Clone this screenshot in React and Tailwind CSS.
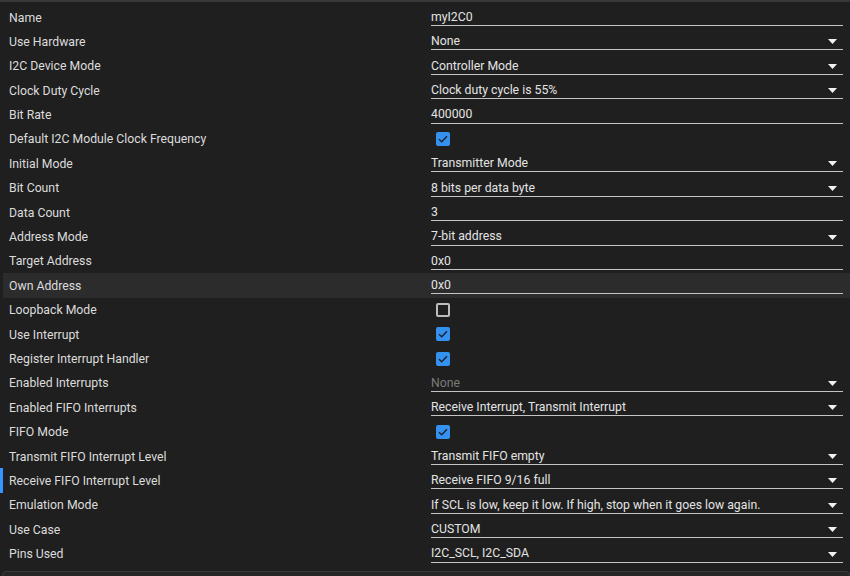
import React from "react";

const rows = [
  { label: "Name", type: "text", value: "myI2C0" },
  { label: "Use Hardware", type: "select", value: "None" },
  { label: "I2C Device Mode", type: "select", value: "Controller Mode" },
  { label: "Clock Duty Cycle", type: "select", value: "Clock duty cycle is 55%" },
  { label: "Bit Rate", type: "text", value: "400000" },
  { label: "Default I2C Module Clock Frequency", type: "check", value: true },
  { label: "Initial Mode", type: "select", value: "Transmitter Mode" },
  { label: "Bit Count", type: "select", value: "8 bits per data byte" },
  { label: "Data Count", type: "text", value: "3" },
  { label: "Address Mode", type: "select", value: "7-bit address" },
  { label: "Target Address", type: "text", value: "0x0" },
  { label: "Own Address", type: "text", value: "0x0", hover: true },
  { label: "Loopback Mode", type: "check", value: false },
  { label: "Use Interrupt", type: "check", value: true },
  { label: "Register Interrupt Handler", type: "check", value: true },
  { label: "Enabled Interrupts", type: "select", value: "None", muted: true },
  { label: "Enabled FIFO Interrupts", type: "select", value: "Receive Interrupt, Transmit Interrupt" },
  { label: "FIFO Mode", type: "check", value: true },
  { label: "Transmit FIFO Interrupt Level", type: "select", value: "Transmit FIFO empty" },
  { label: "Receive FIFO Interrupt Level", type: "select", value: "Receive FIFO 9/16 full", active: true },
  { label: "Emulation Mode", type: "select", value: "If SCL is low, keep it low. If high, stop when it goes low again." },
  { label: "Use Case", type: "select", value: "CUSTOM" },
  { label: "Pins Used", type: "select", value: "I2C_SCL, I2C_SDA" },
];

function Arrow() {
  return (
    <svg width="9" height="5" viewBox="0 0 9 5" className="mt-[1px]">
      <polygon points="0,0 9,0 4.5,5" fill="#f2f2f2" />
    </svg>
  );
}

function Checkbox({ checked }) {
  if (!checked) {
    return <div className="ml-[5px] h-[14px] w-[14px] rounded-[2px] border-2 border-[#bdbdbd]" />;
  }
  return (
    <div className="ml-[5px] flex h-[14px] w-[14px] items-center justify-center rounded-[2px] bg-[#3591f0]">
      <svg width="10" height="8" viewBox="0 0 10 8">
        <path d="M1 4.2 L3.7 6.8 L9 1.2" fill="none" stroke="#1c2430" strokeWidth="1.5" />
      </svg>
    </div>
  );
}

function Value({ row }) {
  if (row.type === "check") {
    return (
      <div className="flex h-full items-center">
        <Checkbox checked={row.value} />
      </div>
    );
  }
  return (
    <div className="flex h-[21px] items-center justify-between border-b border-[#c4c4c4] pt-[4px] pr-[6px]">
      <span className={row.muted ? "text-[#7a7a7a]" : "text-[#e3e3e3]"}>{row.value}</span>
      {row.type === "select" && <Arrow />}
    </div>
  );
}

export default function App() {
  return (
    <div
      className="h-[576px] w-[850px] overflow-hidden border-t-2 border-[#383838] bg-[#1f1f1f] text-[12.25px] text-[#dcdcdc]"
      style={{ fontFamily: "Roboto, 'Noto Sans', sans-serif" }}
    >
      <div className="pt-[3px]">
        {rows.map((row) => (
          <div key={row.label} className="flex h-[24.4px]">
            <div className={`w-[3px] ${row.active ? "bg-[#3794ff]" : ""}`} />
            <div className={`flex flex-1 pr-[7px] ${row.hover ? "bg-[#2c2c2c]" : ""}`}>
              <div className="flex w-[428px] items-center pl-[6px] pt-[1px]">{row.label}</div>
              <div className="flex-1">
                <Value row={row} />
              </div>
            </div>
          </div>
        ))}
      </div>
      <div className="mt-[5px] ml-[2px] h-[20px] rounded-t-[4px] border border-[#3a3a3a] bg-[#262626]" />
    </div>
  );
}
